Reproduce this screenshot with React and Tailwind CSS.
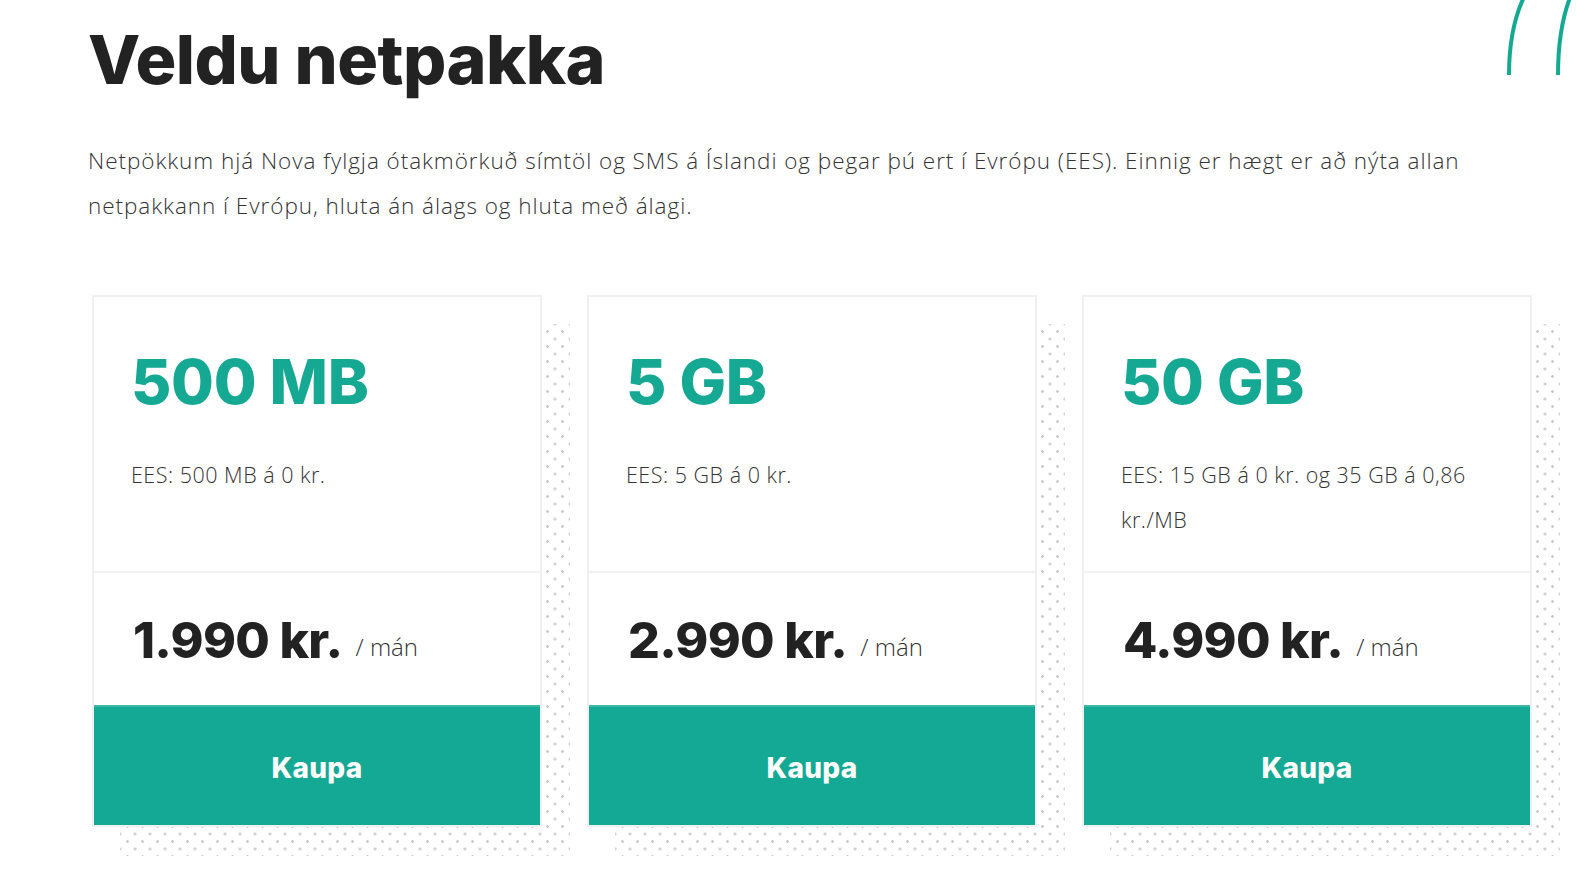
import React from "react";

const plans = [
  { size: "500 MB", ees: "EES: 500 MB á 0 kr.", price: "1.990 kr." },
  { size: "5 GB", ees: "EES: 5 GB á 0 kr.", price: "2.990 kr." },
  { size: "50 GB", ees: "EES: 15 GB á 0 kr. og 35 GB á 0,86 kr./MB", price: "4.990 kr." },
];

function Card({ plan }) {
  return (
    <div className="relative w-[450px] shrink-0">
      <div className="absolute left-[28px] top-[29px] w-[450px] h-full bg-[radial-gradient(circle,#c9c9c9_1px,transparent_1.6px),radial-gradient(circle,#c9c9c9_1px,transparent_1.6px)] bg-[length:15px_15px] bg-[position:0_0,7.5px_7.5px]" />
      <div className="relative w-[450px] flex flex-col bg-white border-2 border-[#f0f0f0]">
        <div className="h-[276px] pl-[37px] pr-[40px] pt-[45px] border-b-2 border-[#f2f2f2]">
          <div className="font-['Inter'] font-extrabold text-[#15a994] text-[62px] leading-[80px] tracking-[-0.3px]">
            {plan.size}
          </div>
          <div className="mt-[30px] font-['Open_Sans'] font-light text-[21.5px] leading-[45px] text-[#333] tracking-[0.5px]">
            {plan.ees}
          </div>
        </div>
        <div className="h-[132px] pl-[39px] flex items-center pt-[2px]">
          <span className="font-['Inter'] font-extrabold text-[50px] text-[#222] tracking-[-0.7px]">{plan.price}</span>
          <span className="ml-[13px] mt-[14px] font-['Open_Sans'] font-light text-[24px] text-[#333]">/ mán</span>
        </div>
        <button className="h-[120px] pt-[4px] bg-[#14a994] border-t-2 border-[#3db8a6] text-white font-['Inter'] font-extrabold text-[28px] tracking-[0.3px]">
          Kaupa
        </button>
      </div>
    </div>
  );
}

export default function App() {
  return (
    <div className="relative w-[1577px] h-[881px] bg-white overflow-hidden">
      <svg className="absolute right-0 top-0" width="90" height="80" viewBox="0 0 90 80">
        <path d="M22 75 C22 40 28 15 38 -5" stroke="#15a994" strokeWidth="4" fill="none" />
        <path d="M71 75 C71 40 76 15 84 -5" stroke="#15a994" strokeWidth="4" fill="none" />
      </svg>
      <div className="pl-[88px] pt-[14px]">
        <h1 className="font-['Inter'] font-extrabold text-[68px] leading-[90px] text-[#222] tracking-[-0.5px]">
          Veldu netpakka
        </h1>
        <p className="mt-[34px] w-[1410px] font-['Open_Sans'] font-light text-[22.5px] leading-[45px] text-[#333] tracking-[0.95px]">
          Netpökkum hjá Nova fylgja ótakmörkuð símtöl og SMS á Íslandi og þegar þú ert í Evrópu (EES). Einnig er hægt er að nýta allan netpakkann í Evrópu, hluta án álags og hluta með álagi.
        </p>
        <div className="mt-[67px] ml-[4px] flex gap-[45px]">
          {plans.map((p) => (
            <Card key={p.size} plan={p} />
          ))}
        </div>
      </div>
    </div>
  );
}
